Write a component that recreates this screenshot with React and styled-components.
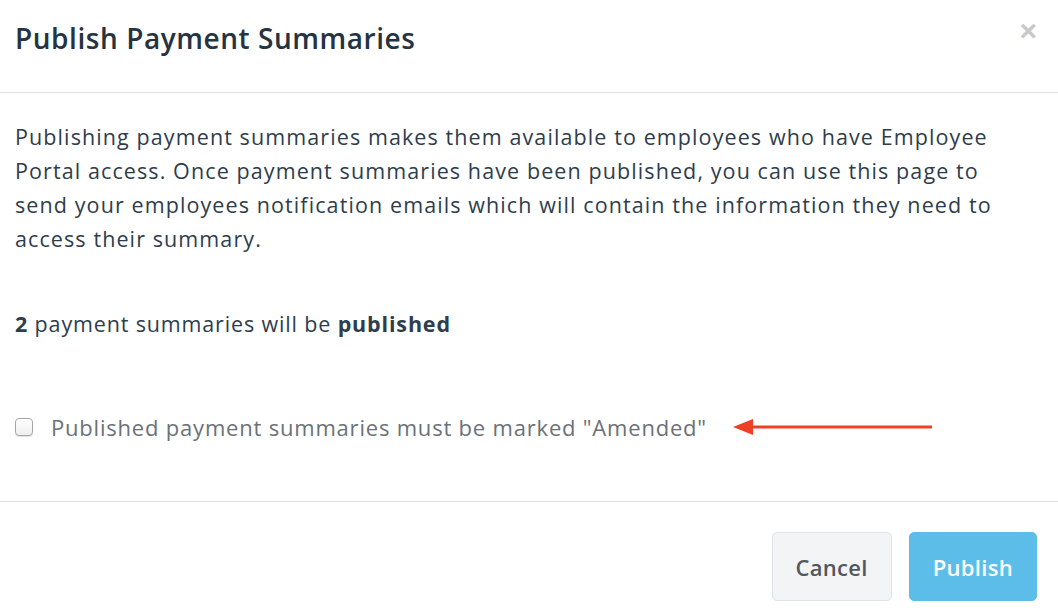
import React from "react";
import styled, { createGlobalStyle } from "styled-components";

const GlobalStyle = createGlobalStyle`
  body {
    margin: 0;
    background: #fff;
    font-family: "Open Sans", "Liberation Sans", sans-serif;
  }
`;

function App() {
  return (
    <Modal>
      <GlobalStyle />
      <Header>
        <Title>Publish Payment Summaries</Title>
        <Close aria-label="Close">×</Close>
      </Header>
      <Body>
        <Intro>
          Publishing payment summaries makes them available to employees who
          have Employee Portal access. Once payment summaries have been
          published, you can use this page to send your employees notification
          emails which will contain the information they need to access their
          summary.
        </Intro>
        <Count>
          <strong>2</strong> payment summaries will be <strong>published</strong>
        </Count>
        <CheckRow>
          <Box type="checkbox" />
          <CheckLabel>Published payment summaries must be marked "Amended"</CheckLabel>
          <Arrow width="200" height="20" viewBox="0 0 200 20">
            <line x1="16" y1="10" x2="199" y2="10" stroke="#ee4027" strokeWidth="3" />
            <polygon points="0,10 20,2 20,18" fill="#ee4027" />
          </Arrow>
        </CheckRow>
      </Body>
      <Footer>
        <CancelButton>Cancel</CancelButton>
        <PublishButton>Publish</PublishButton>
      </Footer>
    </Modal>
  );
}

export default App;

const Modal = styled.div`
  width: 1058px;
  height: 614px;
  background: #fff;
  color: #2e3d4c;
  display: flex;
  flex-direction: column;
`;

const Header = styled.div`
  height: 93px;
  border-bottom: 1px solid #dde1e5;
  display: flex;
  align-items: flex-start;
  justify-content: space-between;
  padding: 0 21px 0 15px;
  box-sizing: border-box;
`;

const Title = styled.h1`
  margin: 19px 0 0;
  font-size: 28px;
  font-weight: 600;
  color: #253342;
  letter-spacing: 0.55px;
`;

const Close = styled.button`
  border: none;
  background: transparent;
  color: #c8c8c8;
  font-size: 30px;
  font-weight: 700;
  line-height: 1;
  padding: 0;
  margin-top: 16px;
  cursor: pointer;
  font-family: "Liberation Sans", sans-serif;
`;

const Body = styled.div`
  flex: 0 0 409px;
  border-bottom: 1px solid #dde1e5;
  padding: 27px 15px 0;
  box-sizing: border-box;
`;

const Intro = styled.p`
  margin: 0;
  font-size: 21.5px;
  line-height: 34px;
  letter-spacing: 1.1px;
  max-width: 980px;
`;

const Count = styled.p`
  margin: 51px 0 0;
  font-size: 21.5px;
  line-height: 34px;
  letter-spacing: 0.85px;

  strong {
    font-weight: 700;
  }
`;

const CheckRow = styled.label`
  display: flex;
  align-items: center;
  margin-top: 71px;
`;

const Box = styled.input`
  appearance: none;
  width: 18px;
  height: 18px;
  margin: 0 18px 0 0;
  border: 1px solid #a3a6a9;
  border-radius: 4px;
  background: linear-gradient(#ffffff, #eeeff0);
  box-shadow: 0 1px 1px rgba(0, 0, 0, 0.12);
  cursor: pointer;
`;

const CheckLabel = styled.span`
  font-size: 22px;
  letter-spacing: 0.8px;
  color: #6b7178;
`;

const Arrow = styled.svg`
  margin-left: 26px;
`;

const Footer = styled.div`
  flex: 1;
  display: flex;
  justify-content: flex-end;
  align-items: flex-start;
  gap: 17px;
  padding: 30px 21px 0 0;
`;

const CancelButton = styled.button`
  height: 69px;
  padding: 0 23px;
  border-radius: 5px;
  border: 1px solid #dfe3e8;
  background: #f3f4f6;
  color: #51575d;
  font-family: inherit;
  font-size: 22px;
  font-weight: 600;
  letter-spacing: 0.3px;
  cursor: pointer;
`;

const PublishButton = styled(CancelButton)`
  border-color: #5dbde9;
  background: #5dbde9;
  color: #fff;
`;
